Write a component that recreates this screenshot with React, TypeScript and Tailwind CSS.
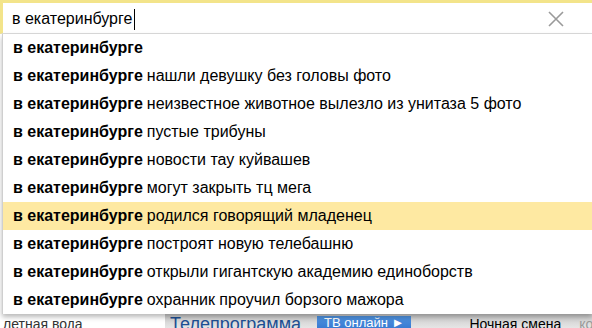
import React from "react";

const rows = [
  "",
  "нашли девушку без головы фото",
  "неизвестное животное вылезло из унитаза 5 фото",
  "пустые трибуны",
  "новости тау куйвашев",
  "могут закрыть тц мега",
  "родился говорящий младенец",
  "построят новую телебашню",
  "открыли гигантскую академию единоборств",
  "охранник проучил борзого мажора",
];

const narrow = { fontFamily: '"Liberation Sans Narrow", "Arial Narrow", "Liberation Sans", sans-serif' };

export default function App() {
  return (
    <div
      className="relative w-[592px] h-[328px] overflow-hidden bg-white text-black"
      style={{ fontFamily: '"Liberation Sans", Arial, sans-serif' }}
    >
      {/* input */}
      <div className="flex h-[34px] items-center border-t-[3px] border-l-[3px] border-b border-t-[#f3e48a] border-l-[#f3e48a] border-b-[#dcdcdc] pl-[9px] pr-[28px]">
        <span className="mt-[2px] text-[16px] leading-none">в екатеринбурге</span>
        <span className="ml-[2px] mt-[2px] h-[21px] w-px bg-black" />
        <div className="flex-1" />
        <svg width="16" height="16" viewBox="0 0 16 16" className="mt-[2px]">
          <path d="M1 1 L15 15 M15 1 L1 15" stroke="#9a9a9a" strokeWidth="1.6" fill="none" />
        </svg>
      </div>

      {/* dropdown */}
      <div className="relative z-10 ml-[2px] border-l border-[#cfcfcf] bg-white shadow-[0_3px_5px_rgba(0,0,0,0.28)]">
        {rows.map((r, i) => (
          <div
            key={i}
            className={`flex h-[28px] items-center whitespace-nowrap pl-[10px] text-[16px] leading-none ${i === 6 ? "bg-[#fee9a2]" : ""}`}
          >
            <span className="font-bold">в екатеринбурге</span>
            {r && <span className="ml-[4px]">{r}</span>}
          </div>
        ))}
      </div>

      {/* page beneath */}
      <div className="flex h-[20px] items-start whitespace-nowrap">
        <div className="w-[165px] shrink-0 bg-white pl-[3px] pt-[3px] text-[14px] leading-none text-[#333]" style={narrow}>
          летная вода
        </div>
        <div className="flex h-full flex-1 items-start bg-gradient-to-b from-[#c9c9c9] to-[#f2f2f2]">
          <span className="ml-[5px] mt-[1px] shrink-0 text-[18px] leading-none text-[#1d4f93]">Телепрограмма</span>
          <span className="ml-[16px] mt-[2px] shrink-0 bg-gradient-to-b from-[#4f93e0] to-[#2f6fcb] px-[7px] pb-[4px] text-[13px] leading-[14px] text-white">
            ТВ онлайн ►
          </span>
          <span className="ml-[58px] mt-[3px] shrink-0 text-[14px] leading-none text-black" style={narrow}>Ночная смена</span>
          <span className="ml-[18px] mt-[3px] shrink-0 text-[14px] leading-none text-[#9a9a9a]" style={narrow}>комедия</span>
        </div>
      </div>
    </div>
  );
}
